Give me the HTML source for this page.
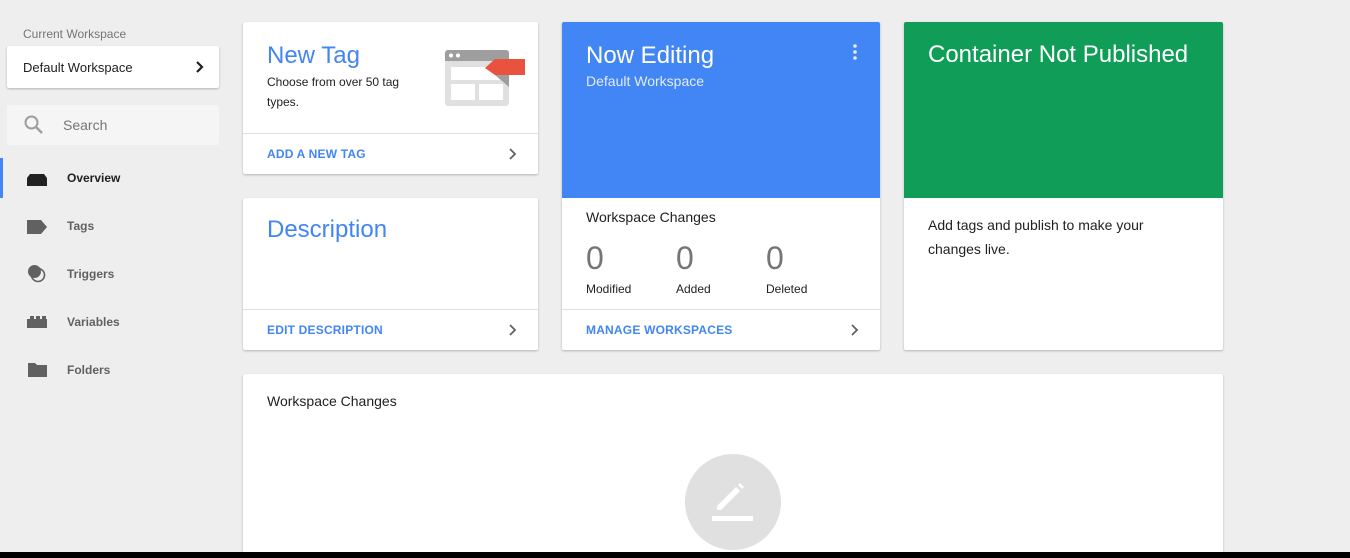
<!DOCTYPE html>
<html><head><meta charset="utf-8"><style>
*{box-sizing:border-box;margin:0;padding:0}
html,body{width:1350px;height:558px;overflow:hidden}
body{background:#eee;font-family:"Liberation Sans",Arial,sans-serif;position:relative;color:#212121}
.card{position:absolute;background:#fff;box-shadow:0 1px 2px rgba(0,0,0,.25);border-radius:2px;overflow:hidden}
.abs{position:absolute}
.link{position:absolute;left:24px;font-size:12px;font-weight:bold;color:#4285f4;letter-spacing:.2px}
.sep{position:absolute;left:0;right:0;border-top:1px solid #e0e0e0}
.chev{position:absolute}
.nav{position:absolute;left:67px;font-size:12px;font-weight:bold;color:#616161}
</style></head><body>
<div class="abs" style="left:23px;top:27px;font-size:12px;color:#757575">Current Workspace</div>
<div class="card" style="left:7px;top:46px;width:212px;height:42px"><div class="abs" style="left:16px;top:14px;font-size:13px">Default Workspace</div>
<svg class="chev" style="left:187px;top:14px" width="12" height="14" viewBox="0 0 12 14"><path d="M3 2l5 5-5 5" fill="none" stroke="#212121" stroke-width="2.2"/></svg></div>
<div class="abs" style="left:7px;top:105px;width:212px;height:40px;background:#f5f5f5;border-radius:2px"></div>
<svg class="abs" style="left:23px;top:114px" width="22" height="22" viewBox="0 0 22 22"><circle cx="8.5" cy="8.5" r="6" fill="none" stroke="#9e9e9e" stroke-width="2"/><path d="M13 13l6 6" stroke="#9e9e9e" stroke-width="2.4"/></svg>
<div class="abs" style="left:63px;top:117px;font-size:14px;color:#757575">Search</div>
<div class="abs" style="left:0;top:158px;width:3px;height:40px;background:#4285f4"></div>
<svg class="abs" style="left:27px;top:170px" width="20" height="16"><path d="M3 4h14l3 4v8H0V8z" fill="#212121"/></svg>
<div class="nav" style="top:171px;color:#212121">Overview</div>
<svg class="abs" style="left:27px;top:220px" width="20" height="14"><path d="M0 0h14l6 7-6 7H0z" fill="#616161"/></svg>
<div class="nav" style="top:219px">Tags</div>
<svg class="abs" style="left:26px;top:263px" width="22" height="22"><circle cx="8.5" cy="8.5" r="6.5" fill="#616161"/><circle cx="12" cy="12" r="6.5" fill="none" stroke="#616161" stroke-width="1.6"/></svg>
<div class="nav" style="top:267px">Triggers</div>
<svg class="abs" style="left:27px;top:316px" width="20" height="12"><path d="M0 3h3V0h4v3h2V0h4v3h2V0h4v3h1v9H0z" fill="#616161"/></svg>
<div class="nav" style="top:315px">Variables</div>
<svg class="abs" style="left:28px;top:362px" width="19" height="15"><path d="M0 1h7l2 2h10v12H0z" fill="#616161"/></svg>
<div class="nav" style="top:363px">Folders</div>

<div class="card" style="left:243px;top:22px;width:295px;height:152px">
<div class="abs" style="left:24px;top:20px;font-size:24px;color:#4285f4">New Tag</div>
<div class="abs" style="left:24px;top:50px;font-size:12px;line-height:20px;width:160px">Choose from over 50 tag types.</div>
<svg class="abs" style="left:202px;top:28px" width="82" height="58" viewBox="0 0 82 58"><rect x="0" y="0" width="64" height="56" rx="3" fill="#e0e0e0"/><path d="M0 3a3 3 0 0 1 3-3h58a3 3 0 0 1 3 3v8H0z" fill="#9e9e9e"/><circle cx="6" cy="5.5" r="2" fill="#fff"/><circle cx="13" cy="5.5" r="2" fill="#fff"/><rect x="6" y="17" width="52" height="13" fill="#fff"/><rect x="6" y="34" width="24" height="16" fill="#fff"/><rect x="34" y="34" width="24" height="16" fill="#fff"/><path d="M50 25l14 12V25z" fill="#9e9e9e"/><path d="M40 18l10-9h30v16H50z" fill="#e8523f"/></svg>
<div class="sep" style="top:111px"></div>
<div class="link" style="top:125px">ADD A NEW TAG</div>
<svg class="chev" style="left:265px;top:125px" width="10" height="14"><path d="M2 2l5 5-5 5" fill="none" stroke="#616161" stroke-width="1.8"/></svg>
</div>

<div class="card" style="left:243px;top:198px;width:295px;height:152px">
<div class="abs" style="left:24px;top:18px;font-size:24px;color:#4285f4">Description</div>
<div class="sep" style="top:111px"></div>
<div class="link" style="top:125px">EDIT DESCRIPTION</div>
<svg class="chev" style="left:265px;top:125px" width="10" height="14"><path d="M2 2l5 5-5 5" fill="none" stroke="#616161" stroke-width="1.8"/></svg>
</div>

<div class="card" style="left:562px;top:22px;width:318px;height:328px">
<div class="abs" style="left:0;top:0;width:318px;height:176px;background:#4285f4"></div>
<div class="abs" style="left:24px;top:20px;font-size:24px;color:#fff">Now Editing</div>
<div class="abs" style="left:24px;top:51px;font-size:14px;color:#e3ecfd">Default Workspace</div>
<svg class="abs" style="left:291px;top:22px" width="4" height="16"><circle cx="2" cy="2" r="1.8" fill="#e3ecfd"/><circle cx="2" cy="8" r="1.8" fill="#e3ecfd"/><circle cx="2" cy="14" r="1.8" fill="#e3ecfd"/></svg>
<div class="abs" style="left:24px;top:187px;font-size:14px">Workspace Changes</div>
<div class="abs" style="left:24px;top:218px;font-size:32px;color:#757575">0</div>
<div class="abs" style="left:114px;top:218px;font-size:32px;color:#757575">0</div>
<div class="abs" style="left:204px;top:218px;font-size:32px;color:#757575">0</div>
<div class="abs" style="left:24px;top:260px;font-size:12px">Modified</div>
<div class="abs" style="left:114px;top:260px;font-size:12px">Added</div>
<div class="abs" style="left:204px;top:260px;font-size:12px">Deleted</div>
<div class="sep" style="top:287px"></div>
<div class="link" style="top:301px">MANAGE WORKSPACES</div>
<svg class="chev" style="left:288px;top:301px" width="10" height="14"><path d="M2 2l5 5-5 5" fill="none" stroke="#616161" stroke-width="1.8"/></svg>
</div>

<div class="card" style="left:904px;top:22px;width:319px;height:328px">
<div class="abs" style="left:0;top:0;width:319px;height:176px;background:#0f9d58"></div>
<div class="abs" style="left:24px;top:19px;font-size:24px;color:#fff">Container Not Published</div>
<div class="abs" style="left:24px;top:191px;font-size:14px;line-height:24px;width:260px">Add tags and publish to make your changes live.</div>
</div>

<div class="card" style="left:243px;top:374px;width:980px;height:190px">
<div class="abs" style="left:24px;top:19px;font-size:14px">Workspace Changes</div>
<div class="abs" style="left:442px;top:80px;width:96px;height:96px;border-radius:50%;background:#e0e0e0"></div>
<svg class="abs" style="left:466px;top:104px" width="48" height="48" viewBox="0 0 48 48"><path d="M8 28L27 9l4 4-19 19H8z" fill="#fff"/><path d="M29 7l2-2 4 4-2 2z" fill="#fff"/><rect x="3" y="38" width="41" height="5" fill="#fff"/></svg>
</div>
<div class="abs" style="left:0;top:552px;width:1350px;height:6px;background:#000"></div>
</body></html>
